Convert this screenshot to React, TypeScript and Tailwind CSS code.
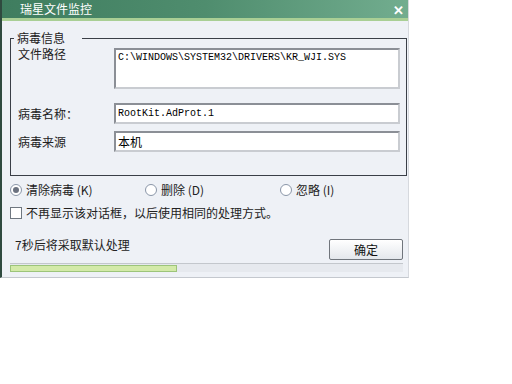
import React from 'react'

const cjk = { fontFamily: '"Noto Sans CJK SC", "Noto Sans", sans-serif' }
const mono = { fontFamily: '"Liberation Mono", "Noto Sans CJK SC", monospace' }

const Radio = ({ checked, label }: { checked?: boolean; label: string }) => (
    <div className="flex items-center gap-[4px]">
        <span className="w-[12px] h-[12px] rounded-full border border-[#8a96a8] bg-white flex items-center justify-center">
            {checked && <span className="w-[6px] h-[6px] rounded-full bg-[#6b7280]" />}
        </span>
        <span className="text-[12px] text-[#222]">{label}</span>
    </div>
)

export default function App() {
    return (
        <div className="w-[512px] h-[384px] bg-white" style={cjk}>
            <div className="w-[409px] h-[278px] flex flex-col bg-[#eef1f6] border-l-2 border-l-[#2f4a3f] border-b border-b-[#c4c8ce] border-r border-r-[#d6d9de]">
                {/* title bar */}
                <div className="h-[18px] flex items-center justify-between pl-[18px] pr-[4px] bg-gradient-to-r from-[#3f7d5f] via-[#4f8d6e] to-[#72ad8f]">
                    <span className="text-[12px] leading-none text-white">瑞星文件监控</span>
                    <span className="text-[13px] leading-none font-bold text-white">✕</span>
                </div>
                <div className="h-[3px] bg-[#a9cf95]" />

                <div className="flex flex-col pl-[8px] pr-[1px]">
                    {/* group box */}
                    <div className="relative mt-[17px] h-[138px] border border-[#3a3f47] pt-[9px] pl-[7px] pr-[6px]">
                        <span className="absolute -top-[9px] left-[3px] pl-[3px] pr-[17px] bg-[#eef1f6] text-[12px] leading-[16px] text-[#222]">病毒信息</span>
                        <div className="flex">
                            <span className="w-[96px] -mt-[2px] text-[12px] leading-[16px] text-[#222]">文件路径</span>
                            <div className="flex-1 h-[41px] bg-white border-2 border-t-[#8b8f96] border-l-[#8b8f96] border-r-[#c9ccd1] border-b-[#c9ccd1] px-[2px] pt-[1px] text-[10px] leading-[14px] text-black" style={mono}>
                                C:\WINDOWS\SYSTEM32\DRIVERS\KR_WJI.SYS
                            </div>
                        </div>
                        <div className="flex items-center mt-[14px]">
                            <span className="w-[96px] text-[12px] leading-[16px] text-[#222]">病毒名称：</span>
                            <div className="flex-1 h-[21px] bg-white border-2 border-t-[#8b8f96] border-l-[#8b8f96] border-r-[#c9ccd1] border-b-[#c9ccd1] px-[2px] flex items-center text-[10px] text-black" style={mono}>
                                RootKit.AdProt.1
                            </div>
                        </div>
                        <div className="flex items-center mt-[7px]">
                            <span className="w-[96px] text-[12px] leading-[16px] text-[#222]">病毒来源</span>
                            <div className="flex-1 h-[21px] bg-white border-2 border-t-[#8b8f96] border-l-[#8b8f96] border-r-[#c9ccd1] border-b-[#c9ccd1] px-[2px] flex items-center text-[12px] text-black">
                                本机
                            </div>
                        </div>
                    </div>

                    {/* options */}
                    <div className="flex items-center mt-[6px] h-[16px]">
                        <div className="w-[135px]"><Radio checked label="清除病毒 (K)" /></div>
                        <div className="w-[135px]"><Radio label="删除 (D)" /></div>
                        <Radio label="忽略 (I)" />
                    </div>
                    <div className="flex items-center gap-[4px] mt-[7px] h-[16px]">
                        <span className="w-[12px] h-[12px] border border-[#6f7780] bg-white" />
                        <span className="text-[12px] text-[#222]">不再显示该对话框，以后使用相同的处理方式。</span>
                    </div>

                    <div className="flex items-start justify-between mt-[18px] pr-[4px]">
                        <span className="pl-[5px] -mt-[2px] text-[12px] leading-[16px] text-[#222]">7秒后将采取默认处理</span>
                        <button className="w-[74px] h-[21px] rounded-[2px] border border-[#70757c] bg-gradient-to-b from-white to-[#e4e7ec] text-[12px] text-[#111]" style={cjk}>
                            确定
                        </button>
                    </div>

                    {/* progress */}
                    <div className="mt-[3px] h-[9px] border-t border-[#c3c7cc] bg-[#e6e9ee] mr-[4px] flex items-center">
                        <div className="w-[167px] h-[7px] bg-[#d3eaa8] border border-[#9cc47a]" />
                    </div>
                </div>
            </div>
        </div>
    )
}
